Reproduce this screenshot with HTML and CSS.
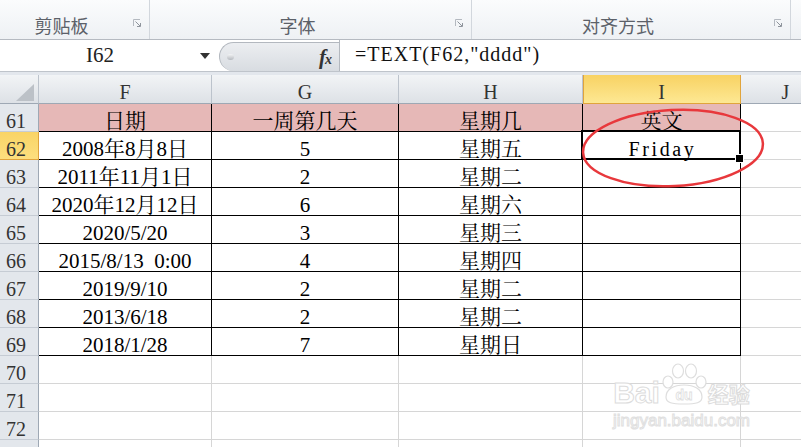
FILE: index.html
```html
<!DOCTYPE html>
<html lang="zh-CN">
<head>
    <meta charset="UTF-8">
    <meta name="viewport" content="width=device-width, initial-scale=1.0">
    <link rel="stylesheet" href="styles.css">
    <title>TEXT 函数 - 星期</title>
</head>
<body>

    <!-- cinta de opciones (solo la fila de grupos) -->
    <div class="ribbon">
        <div class="group g-clip">
            <span class="label">剪贴板</span>
            <span class="launcher"><svg width="8" height="8" viewBox="0 0 8 8"><path d="M0.5 7V0.5H7" fill="none" stroke="#b4b9c0"/><path d="M2.5 2.5L7 7M7.5 4V7.5H4" fill="none" stroke="#8e949c"/></svg></span>
        </div>
        <div class="group g-font">
            <span class="label">字体</span>
            <span class="launcher"><svg width="8" height="8" viewBox="0 0 8 8"><path d="M0.5 7V0.5H7" fill="none" stroke="#b4b9c0"/><path d="M2.5 2.5L7 7M7.5 4V7.5H4" fill="none" stroke="#8e949c"/></svg></span>
        </div>
        <div class="group g-align">
            <span class="label">对齐方式</span>
            <span class="launcher"><svg width="8" height="8" viewBox="0 0 8 8"><path d="M0.5 7V0.5H7" fill="none" stroke="#b4b9c0"/><path d="M2.5 2.5L7 7M7.5 4V7.5H4" fill="none" stroke="#8e949c"/></svg></span>
        </div>
    </div>

    <!-- barra de fórmulas -->
    <div class="formula-bar">
        <div class="name-box">
            <span class="name">I62</span>
            <span class="caret"></span>
        </div>
        <div class="fx-pill">
            <span class="dot"></span>
            <span class="fx"><i>f</i><i class="x">x</i></span>
        </div>
        <div class="formula">=TEXT(F62,"dddd")</div>
    </div>
    <div class="band"></div>

    <!-- hoja -->
    <div class="sheet">
        <div class="cell ch corner"><span class="tri"></span></div>
        <div class="cell ch">F</div>
        <div class="cell ch">G</div>
        <div class="cell ch">H</div>
        <div class="cell ch ch-sel">I</div>
        <div class="cell ch">J</div>

        <div class="cell rh">61</div>
        <div class="cell d pink">日期</div>
        <div class="cell d pink">一周第几天</div>
        <div class="cell d pink">星期几</div>
        <div class="cell d pink">英文</div>
        <div class="cell"></div>

        <div class="cell rh rh-sel">62</div>
        <div class="cell d">2008年8月8日</div>
        <div class="cell d">5</div>
        <div class="cell d">星期五</div>
        <div class="cell d active"><span class="eng">Friday</span></div>
        <div class="cell"></div>

        <div class="cell rh">63</div>
        <div class="cell d">2011年11月1日</div>
        <div class="cell d">2</div>
        <div class="cell d">星期二</div>
        <div class="cell d"></div>
        <div class="cell"></div>

        <div class="cell rh">64</div>
        <div class="cell d">2020年12月12日</div>
        <div class="cell d">6</div>
        <div class="cell d">星期六</div>
        <div class="cell d"></div>
        <div class="cell"></div>

        <div class="cell rh">65</div>
        <div class="cell d">2020/5/20</div>
        <div class="cell d">3</div>
        <div class="cell d">星期三</div>
        <div class="cell d"></div>
        <div class="cell"></div>

        <div class="cell rh">66</div>
        <div class="cell d">2015/8/13&nbsp;&nbsp;0:00</div>
        <div class="cell d">4</div>
        <div class="cell d">星期四</div>
        <div class="cell d"></div>
        <div class="cell"></div>

        <div class="cell rh">67</div>
        <div class="cell d">2019/9/10</div>
        <div class="cell d">2</div>
        <div class="cell d">星期二</div>
        <div class="cell d"></div>
        <div class="cell"></div>

        <div class="cell rh">68</div>
        <div class="cell d">2013/6/18</div>
        <div class="cell d">2</div>
        <div class="cell d">星期二</div>
        <div class="cell d"></div>
        <div class="cell"></div>

        <div class="cell rh">69</div>
        <div class="cell d">2018/1/28</div>
        <div class="cell d">7</div>
        <div class="cell d">星期日</div>
        <div class="cell d"></div>
        <div class="cell"></div>

        <div class="cell rh">70</div>
        <div class="cell"></div><div class="cell"></div><div class="cell"></div><div class="cell"></div><div class="cell"></div>
        <div class="cell rh">71</div>
        <div class="cell"></div><div class="cell"></div><div class="cell"></div><div class="cell"></div><div class="cell"></div>
        <div class="cell rh">72</div>
        <div class="cell"></div><div class="cell"></div><div class="cell"></div><div class="cell"></div><div class="cell"></div>
        <div class="cell rh"></div>
        <div class="cell"></div><div class="cell"></div><div class="cell"></div><div class="cell"></div><div class="cell"></div>

        <!-- círculo rojo a mano alzada -->
        <svg class="circle" width="200" height="95" viewBox="0 0 200 95">
            <ellipse cx="98" cy="45" rx="90" ry="38" transform="rotate(-3 98 45)" fill="none" stroke="#e8383c" stroke-width="2.5"/>
        </svg>

        <!-- marca de agua -->
        <div class="watermark">
            <div class="wm-top">
                <span class="wm-bai">Bai</span>
                <svg class="paw" width="48" height="42" viewBox="0 0 48 42">
                    <g fill="#fff" stroke="#dedede" stroke-width="1.2">
                        <ellipse cx="8" cy="19" rx="5" ry="6"/>
                        <ellipse cx="18" cy="8" rx="5.5" ry="7"/>
                        <ellipse cx="31" cy="8" rx="5.5" ry="7"/>
                        <ellipse cx="41" cy="19" rx="5" ry="6"/>
                        <path d="M6 34C6 26 14 22 24 22C34 22 42 26 42 34C42 40 36 41 24 41C12 41 6 40 6 34Z"/>
                    </g>
                    <text x="24" y="37" text-anchor="middle" font-family="Liberation Sans, sans-serif" font-weight="bold" font-size="14" fill="#fff" stroke="#dedede" stroke-width="0.8">du</text>
                </svg>
                <span class="wm-jy">经验</span>
            </div>
            <div class="wm-url">jingyan.baidu.com</div>
        </div>
    </div>

</body>
</html>
```

FILE: styles.css
```css
* {
    box-sizing: border-box;
}

body {
    margin: 0;
    width: 801px;
    height: 447px;
    overflow: hidden;
    background-color: #ffffff;
    font-family: "Liberation Serif", "Noto Serif CJK SC", "Noto Sans CJK SC", serif;
    color: #000;
}

/* cinta */
.ribbon {
    display: flex;
    height: 40px;
    background: linear-gradient(#fbfcfd, #eef1f4);
    border-bottom: 1px solid #b5bac1;
}

.group {
    display: flex;
    align-items: flex-end;
    padding-bottom: 1px;
    border-right: 1px solid #d2d7dd;
}

.g-clip { width: 150px; }
.g-font { width: 322px; }
.g-align { width: 319px; }

.label {
    flex: 1;
    text-align: center;
    font-family: "Noto Sans CJK SC", sans-serif;
    font-size: 18px;
    line-height: 26px;
    color: #5c6169;
}

.launcher {
    align-self: flex-start;
    width: 26px;
    padding: 19px 0 0 10px;
    line-height: 0;
}

/* barra de fórmulas */
.formula-bar {
    display: flex;
    height: 32px;
    background-color: #ffffff;
    border-bottom: 1px solid #bfc4cb;
}

.name-box {
    display: flex;
    align-items: center;
    width: 215px;
}

.name {
    flex: 1;
    text-align: center;
    font-size: 21px;
    color: #222;
}

.caret {
    width: 0;
    height: 0;
    margin-right: 5px;
    border-left: 5.5px solid transparent;
    border-right: 5.5px solid transparent;
    border-top: 6px solid #333;
}

.fx-pill {
    display: flex;
    align-items: center;
    justify-content: space-between;
    align-self: flex-end;
    width: 120px;
    height: 29px;
    margin-left: 4px;
    padding: 0 8px 0 7px;
    background: linear-gradient(#eceef1, #d8dce1);
    border: 1px solid #b3b8bf;
    border-right: none;
    border-bottom: none;
    border-radius: 15px 0 0 15px;
}

.dot {
    width: 7px;
    height: 6px;
    border-radius: 50%;
    background: linear-gradient(#f4f5f6, #b4b8be);
}

.fx {
    font-size: 21px;
    font-weight: bold;
    color: #333;
    letter-spacing: -1px;
}

.fx .x {
    font-size: 14px;
}

.formula {
    flex: 1;
    padding-left: 15px;
    border-left: 1px solid #b3b8bf;
    font-size: 20px;
    letter-spacing: 1px;
    line-height: 29px;
    color: #111;
}

.band {
    height: 3px;
    background-color: #e3e7ed;
}

/* hoja */
.sheet {
    position: relative;
    display: grid;
    grid-template-columns: 39px 173px 187px 184px 158px 90px;
    grid-template-rows: 29px;
    grid-auto-rows: 28px;
}

.cell {
    display: flex;
    align-items: flex-end;
    justify-content: center;
    border-right: 1px solid #d6d6d6;
    border-bottom: 1px solid #d6d6d6;
    font-size: 21px;
    line-height: 20px;
    white-space: nowrap;
}

.d {
    border-color: #000;
}

.pink {
    background-color: #e6b8b7;
}

.eng {
    font-size: 20px;
    letter-spacing: 2.6px;
    padding-left: 2px;
}

.ch {
    background: linear-gradient(#f2f4f6, #dde1e6);
    border-right-color: #bcc3cc;
    border-bottom-color: #9ea8b4;
    font-size: 20px;
    color: #333;
    padding-bottom: 1px;
}

.ch-sel {
    background: linear-gradient(#f8d263, #fde893);
    border-right-color: #e0a43c;
    border-bottom-color: #e0a43c;
    box-shadow: inset 1px 0 0 #e0a43c;
}

.corner {
    justify-content: flex-end;
    padding: 0 4px 2px 0;
}

.tri {
    width: 0;
    height: 0;
    border-left: 18px solid transparent;
    border-bottom: 17px solid #bcc1c7;
}

.rh {
    justify-content: flex-start;
    padding-left: 6px;
    background-color: #e3e7ec;
    border-right-color: #9ea8b4;
    border-bottom-color: #c6ccd4;
    font-size: 20px;
    color: #333;
}

.rh-sel {
    background: linear-gradient(#f9d466, #fddf7e);
    border-right-color: #e0a43c;
    border-bottom-color: #e0a43c;
}

/* celda activa */
.active {
    position: relative;
}

.active::before {
    content: "";
    position: absolute;
    left: -2px;
    top: -2px;
    right: -1px;
    bottom: -1px;
    border: 2px solid #000;
}

.active::after {
    content: "";
    position: absolute;
    right: -4px;
    bottom: -4px;
    width: 7px;
    height: 7px;
    background-color: #000;
    border: 1px solid #fff;
}

.circle {
    position: absolute;
    left: 575px;
    top: 28px;
}

/* marca de agua */
.watermark {
    position: absolute;
    left: 613px;
    top: 288px;
    display: flex;
    flex-direction: column;
    align-items: center;
    pointer-events: none;
}

.wm-top {
    display: flex;
    align-items: flex-end;
}

.wm-bai {
    font-family: "Liberation Sans", sans-serif;
    font-weight: bold;
    font-size: 30px;
    line-height: 24px;
    color: #fff;
    -webkit-text-stroke: 1px #dcdcdc;
}

.wm-jy {
    font-family: "Noto Sans CJK SC", sans-serif;
    font-weight: bold;
    font-size: 21px;
    line-height: 24px;
    color: #fff;
    -webkit-text-stroke: 1px #dcdcdc;
}

.wm-url {
    margin-top: 6px;
    font-family: "Liberation Sans", sans-serif;
    font-size: 17px;
    line-height: 20px;
    color: #fff;
    -webkit-text-stroke: 1px #e0e0e0;
}
```
